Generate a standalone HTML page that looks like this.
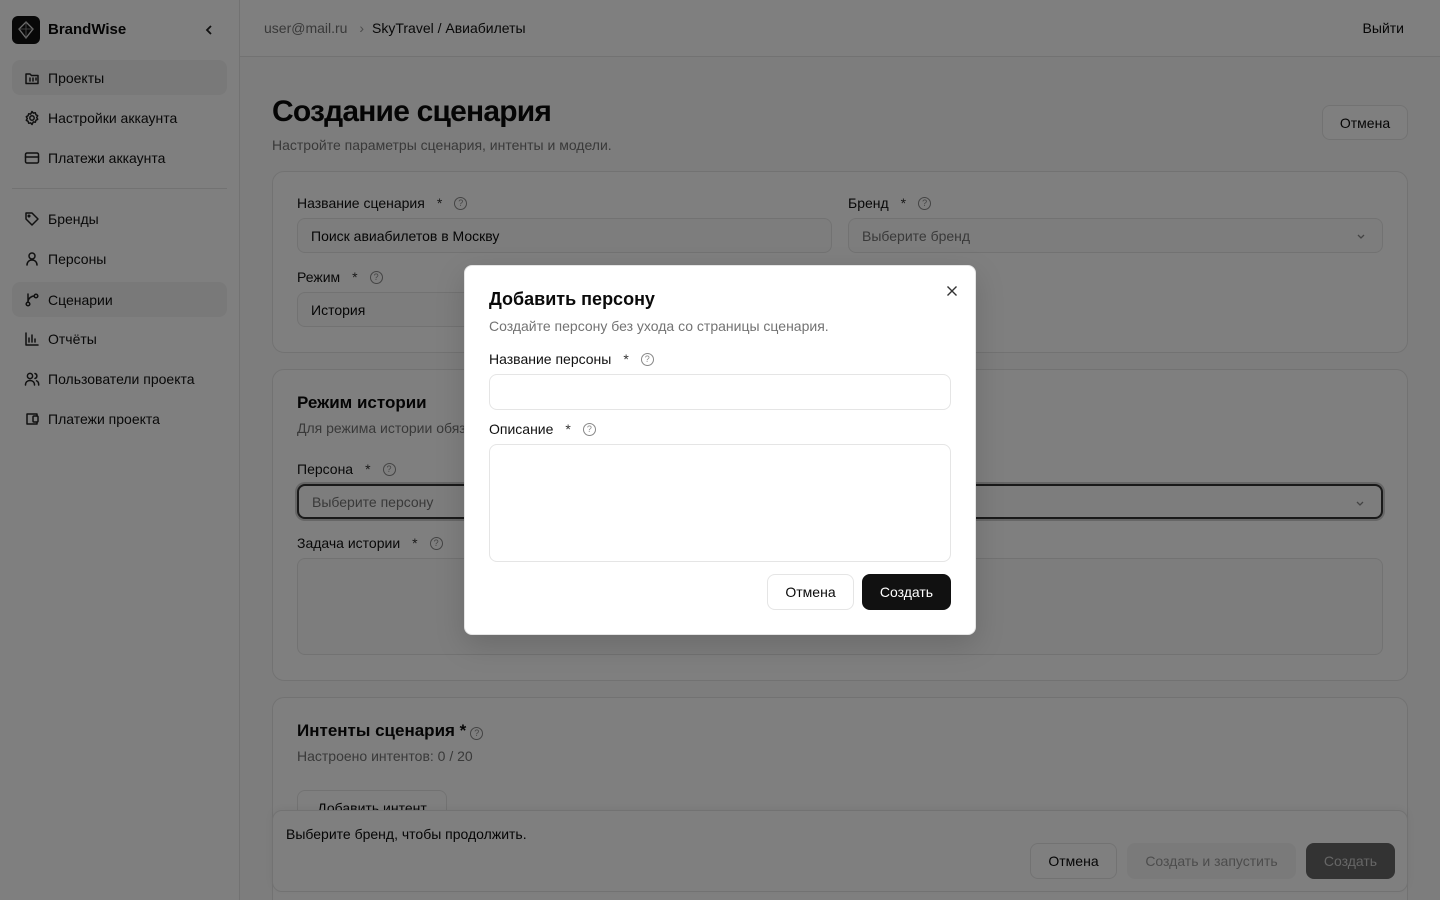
<!DOCTYPE html>
<html style="overflow:hidden;height:900px"><head><meta charset="utf-8"><style>
*{box-sizing:border-box;margin:0;padding:0}
body{width:1440px;height:900px;overflow:hidden;position:relative;background:#fafafa;font-family:"Liberation Sans","Noto Sans CJK SC",sans-serif;color:#0a0a0a;font-size:14px}
.a{position:absolute}
.side{left:0;top:0;width:240px;height:900px;background:#fff;border-right:1px solid #e5e5e5}
.nav{position:absolute;left:12px;width:215px;height:35px;border-radius:8px;display:flex;align-items:center;padding-left:12px;font-size:14px;color:#111}
.nav svg{width:16px;height:16px;margin-right:8px;fill:none;stroke:#222;stroke-width:1.5;stroke-linecap:round;stroke-linejoin:round}
.nav.act{background:#f2f2f2}
.top{left:240px;top:0;right:0;height:57px;border-bottom:1px solid #e5e5e5;background:#fff}
.card{position:absolute;left:272px;width:1136px;border:1px solid #e5e5e5;border-radius:12px;background:#fff}
.lbl{position:absolute;font-size:14px;display:flex;align-items:center;color:#111}
.lbl .s{margin-left:12px;color:#333}
.q{display:inline-block;width:13px;height:13px;border:1px solid #888;border-radius:50%;font-size:9px;line-height:11px;text-align:center;color:#888;margin-left:12px;font-weight:400}
.inp{position:absolute;border:1px solid #e5e5e5;border-radius:8px;background:#fafafa;display:flex;align-items:center;padding-left:13px;font-size:14px}
.btn{position:absolute;border:1px solid #e5e5e5;border-radius:8px;background:#fff;display:flex;align-items:center;justify-content:center;font-size:14px}
.ov{left:0;top:0;width:1440px;height:900px;background:rgba(0,0,0,.5)}
.chev{position:absolute;right:16px;top:12px;width:10px;height:10px}
</style></head><body>
<div class="a side">
 <div class="a" style="left:12px;top:16px;width:28px;height:28px;border-radius:6px;background:#111"><svg width="28" height="28" viewBox="0 0 28 28"><path d="M14 6l7 7-7 9-7-9z" fill="none" stroke="#ddd" stroke-width="1.3"/><path d="M7 13h14M14 6v16" stroke="#999" stroke-width=".8"/></svg></div>
 <div class="a" style="left:48px;top:21px;font-size:15px;font-weight:700">BrandWise</div>
 <svg class="a" style="left:204px;top:24px" width="10" height="12" viewBox="0 0 10 12"><path d="M7 2L3 6l4 4" fill="none" stroke="#222" stroke-width="1.8"/></svg>
 <div class="nav act" style="top:60px"><svg viewBox="0 0 16 16"><path d="M2 4h4l1.5 1.5H14v8H2z"/><path d="M6 8v3M9 8v3M12 8v2"/></svg>Проекты</div>
 <div class="nav" style="top:100px"><svg viewBox="0 0 16 16"><circle cx="8" cy="8" r="2.2"/><path d="M8 1.5l1.3 1.6 2-.4.6 2 1.8 1-1 1.8 1 1.8-1.8 1-.6 2-2-.4L8 14.5l-1.3-1.6-2 .4-.6-2-1.8-1 1-1.8-1-1.8 1.8-1 .6-2 2 .4z"/></svg>Настройки аккаунта</div>
 <div class="nav" style="top:140px"><svg viewBox="0 0 16 16"><rect x="1.5" y="3" width="13" height="10" rx="1.5"/><path d="M1.5 7h13"/></svg>Платежи аккаунта</div>
 <div class="a" style="left:12px;top:188px;width:215px;height:1px;background:#e5e5e5"></div>
 <div class="nav" style="top:201px"><svg viewBox="0 0 16 16"><path d="M2 2h6l6 6-6 6-6-6z"/><circle cx="5" cy="5" r=".8"/></svg>Бренды</div>
 <div class="nav" style="top:241px"><svg viewBox="0 0 16 16"><circle cx="8" cy="5" r="3"/><path d="M3 14c0-3 2.2-5 5-5s5 2 5 5"/></svg>Персоны</div>
 <div class="nav act" style="top:282px"><svg viewBox="0 0 16 16"><circle cx="4" cy="12" r="1.8"/><circle cx="12" cy="4" r="1.8"/><path d="M4 2v8M4 10c0-4 4-6 6-6"/></svg>Сценарии</div>
 <div class="nav" style="top:321px"><svg viewBox="0 0 16 16"><path d="M2 2v12h12M5 11V7M8 11V4M11 11V8"/></svg>Отчёты</div>
 <div class="nav" style="top:361px"><svg viewBox="0 0 16 16"><circle cx="6" cy="5" r="2.6"/><path d="M1.5 14c0-3 2-4.5 4.5-4.5s4.5 1.5 4.5 4.5M11 2.5a2.6 2.6 0 010 5M12.5 9.8c1.5.5 2.2 2 2.2 4.2"/></svg>Пользователи проекта</div>
 <div class="nav" style="top:401px"><svg viewBox="0 0 16 16"><path d="M13 5V3H3v10h10v-2"/><rect x="9" y="5" width="5" height="6" rx="1"/></svg>Платежи проекта</div>
</div>
<div class="a top">
 <div class="a" style="left:24px;top:20px;color:#737373">user@mail.ru <span style="margin:0 8px;color:#999">›</span><span style="color:#111">SkyTravel / Авиабилеты</span></div>
 <div class="a" style="right:36px;top:20px">Выйти</div>
</div>
<div class="a" style="left:272px;top:95px;font-size:30px;font-weight:700;letter-spacing:-.8px">Создание сценария</div>
<div class="a" style="left:272px;top:137px;color:#737373">Настройте параметры сценария, интенты и модели.</div>
<div class="btn" style="left:1322px;top:105px;width:86px;height:35px">Отмена</div>

<div class="card" style="top:171px;height:182px"></div>
<div class="lbl" style="left:297px;top:195px">Название сценария<span class="s">*</span><span class="q">?</span></div>
<div class="inp" style="left:297px;top:218px;width:535px;height:35px">Поиск авиабилетов в Москву</div>
<div class="lbl" style="left:848px;top:195px">Бренд<span class="s">*</span><span class="q">?</span></div>
<div class="inp" style="left:848px;top:218px;width:535px;height:35px;color:#737373">Выберите бренд<svg class="chev" viewBox="0 0 10 10"><path d="M2 4l3 3 3-3" fill="none" stroke="#888" stroke-width="1.3"/></svg></div>
<div class="lbl" style="left:297px;top:269px">Режим<span class="s">*</span><span class="q">?</span></div>
<div class="inp" style="left:297px;top:292px;width:535px;height:35px">История</div>

<div class="card" style="top:369px;height:312px"></div>
<div class="a" style="left:297px;top:393px;font-size:17px;font-weight:700">Режим истории</div>
<div class="a" style="left:297px;top:420px;color:#737373">Для режима истории обязательны персона и задача.</div>
<div class="lbl" style="left:297px;top:461px">Персона<span class="s">*</span><span class="q">?</span></div>
<div class="inp" style="left:297px;top:484px;width:1086px;height:35px;color:#737373;border:2px solid #333;box-shadow:0 0 0 2px #ccc">Выберите персону<svg class="chev" viewBox="0 0 10 10"><path d="M2 4l3 3 3-3" fill="none" stroke="#888" stroke-width="1.3"/></svg></div>
<div class="lbl" style="left:297px;top:535px">Задача истории<span class="s">*</span><span class="q">?</span></div>
<div class="inp" style="left:297px;top:558px;width:1086px;height:97px"></div>

<div class="card" style="top:697px;height:203px;border-bottom:none;border-radius:12px 12px 0 0"></div>
<div class="a" style="left:297px;top:721px;font-size:17px;font-weight:700">Интенты сценария *<span class="q" style="margin-left:4px">?</span></div>
<div class="a" style="left:297px;top:748px;color:#737373">Настроено интентов: 0 / 20</div>
<div class="btn" style="left:297px;top:790px;width:150px;height:35px;align-items:flex-start;padding-top:9px">Добавить интент</div>

<div class="a" style="left:272px;top:810px;width:1136px;height:82px;background:#fff;border:1px solid #e5e5e5;border-radius:10px;box-shadow:0 -2px 8px rgba(0,0,0,.05)">
 <div class="a" style="left:13px;top:15px">Выберите бренд, чтобы продолжить.</div>
</div>
<div class="btn" style="left:1030px;top:843px;width:87px;height:36px">Отмена</div>
<div class="btn" style="left:1127px;top:843px;width:169px;height:36px;background:#f5f5f5;border-color:#f5f5f5;color:#999">Создать и запустить</div>
<div class="btn" style="left:1306px;top:843px;width:89px;height:36px;background:#666;border-color:#666;color:#ccc">Создать</div>

<div class="a ov"></div>

<div class="a" style="left:464px;top:265px;width:512px;height:370px;background:#fff;border-radius:8px;border:1px solid #e5e5e5;box-shadow:0 10px 30px rgba(0,0,0,.15)">
 <svg class="a" style="left:481px;top:19px" width="12" height="12" viewBox="0 0 12 12"><path d="M1.5 1.5l9 9M10.5 1.5l-9 9" stroke="#333" stroke-width="1.4"/></svg>
 <div class="a" style="left:24px;top:23px;font-size:18px;font-weight:700">Добавить персону</div>
 <div class="a" style="left:24px;top:52px;color:#737373">Создайте персону без ухода со страницы сценария.</div>
 <div class="lbl" style="left:24px;top:85px">Название персоны<span class="s">*</span><span class="q">?</span></div>
 <div class="inp" style="left:24px;top:108px;width:462px;height:36px;background:#fff"></div>
 <div class="lbl" style="left:24px;top:155px">Описание<span class="s">*</span><span class="q">?</span></div>
 <div class="inp" style="left:24px;top:178px;width:462px;height:118px;background:#fff"></div>
 <div class="btn" style="left:302px;top:308px;width:87px;height:36px">Отмена</div>
 <div class="btn" style="left:397px;top:308px;width:89px;height:36px;background:#111;border-color:#111;color:#fff">Создать</div>
</div>
</body></html>
